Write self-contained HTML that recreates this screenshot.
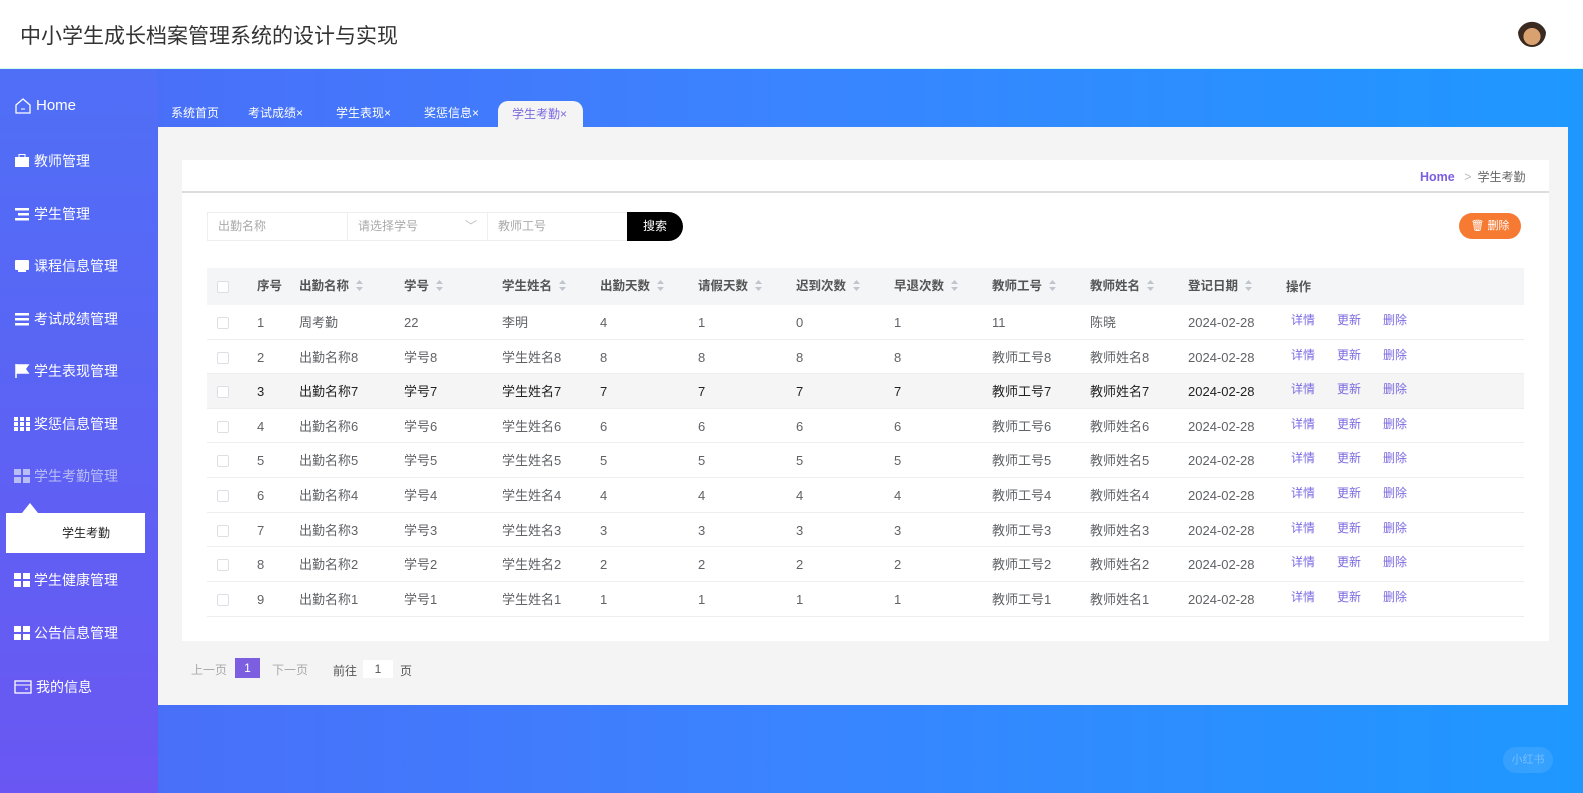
<!DOCTYPE html>
<html><head><meta charset="utf-8"><style>
*{margin:0;padding:0;box-sizing:border-box}
body{width:1583px;height:793px;overflow:hidden;position:relative;font-family:"Liberation Sans","Noto Sans CJK SC",sans-serif;background:linear-gradient(90deg,#4d6af7 0%,#3a84ff 50%,#1e98ff 100%)}
.abs{position:absolute}
.top{left:0;top:0;width:1583px;height:69px;background:#fff;border-bottom:1px solid #cfe}
.title{left:20px;top:20px;font-size:21px;color:#333}
.side{left:0;top:69px;width:158px;height:724px;background:linear-gradient(180deg,#4f6ff7 0%,#5f60f3 60%,#6a57f3 100%)}
.mi{position:absolute;left:14px;color:#fff;font-size:14px;display:flex;align-items:center;gap:4px;height:20px;line-height:20px}
.ico{width:16px;height:14px;display:inline-block}
.tab{position:absolute;top:100px;height:27px;font-size:12px;color:#fff;line-height:27px;white-space:nowrap}
.content{left:158px;top:127px;width:1410px;height:578px;background:#f4f4f4}
.card{left:182px;top:160px;width:1367px;height:481px;background:#fff}
.bc{left:182px;top:191px;width:1367px;height:2px;background:#ddd}
.inp{top:212px;height:29px;border:1px solid #eee;background:#fff;font-size:12px;color:#aaa;line-height:27px;padding-left:10px}
.th{top:268px;left:207px;width:1317px;height:37px;background:#f4f5f7}
.row{left:207px;width:1317px;border-bottom:1px solid #eee;background:#fff}
.c{position:absolute;font-size:13px;color:#606266;white-space:nowrap}
.h{font-weight:bold;color:#555;font-size:12.5px}
.cb{position:absolute;left:217px;width:12px;height:12px;border:1px solid #dcdfe6;border-radius:2px;background:#fff}
.lk{color:#7b6ae0;font-size:12px}
.s{margin-left:7px;vertical-align:-1px}
</style></head><body>
<div class="abs top"></div>
<div class="abs title">中小学生成长档案管理系统的设计与实现</div>
<div class="abs" style="left:1518px;top:17px;width:28px;height:30px;border-radius:50%;background:radial-gradient(circle at 50% 65%,#d9a070 0 35%,#3a2a20 36% 60%,transparent 62%)"></div>
<div class="abs side"></div>
<div class="mi" style="top:96px;font-size:15px"><svg width="18" height="18" viewBox="0 0 18 18"><path d="M2 8L9 2l7 6v8H2z" fill="none" stroke="#fff" stroke-width="1.3"/><path d="M7 12h4" stroke="#fff"/></svg>Home</div>
<div class="mi" style="top:151px"><svg class="ico" viewBox="0 0 16 14"><rect x="1" y="3" width="14" height="10" fill="#fff"/><rect x="5" y="0.5" width="6" height="3" fill="none" stroke="#fff"/></svg>教师管理</div>
<div class="mi" style="top:204px"><svg class="ico" viewBox="0 0 16 14"><rect x="1" y="1" width="14" height="2.5" fill="#fff"/><rect x="4" y="6" width="11" height="2.5" fill="#fff"/><rect x="1" y="11" width="14" height="2.5" fill="#fff"/></svg>学生管理</div>
<div class="mi" style="top:256px"><svg class="ico" viewBox="0 0 16 14"><rect x="1" y="1" width="14" height="10" rx="1" fill="#fff"/><rect x="4" y="11" width="8" height="2" fill="#fff"/></svg>课程信息管理</div>
<div class="mi" style="top:309px"><svg class="ico" viewBox="0 0 16 14"><rect x="1" y="1" width="14" height="2.5" fill="#fff"/><rect x="1" y="6" width="14" height="2.5" fill="#fff"/><rect x="1" y="11" width="14" height="2.5" fill="#fff"/></svg>考试成绩管理</div>
<div class="mi" style="top:361px"><svg class="ico" viewBox="0 0 16 14"><path d="M2 0v14M2 1h12l-3 4 3 4H2" fill="#fff" stroke="#fff" stroke-width="1.5"/></svg>学生表现管理</div>
<div class="mi" style="top:414px"><svg class="ico" viewBox="0 0 16 14"><g fill="#fff"><rect x="0" y="0" width="4" height="4"/><rect x="6" y="0" width="4" height="4"/><rect x="12" y="0" width="4" height="4"/><rect x="0" y="5" width="4" height="4"/><rect x="6" y="5" width="4" height="4"/><rect x="12" y="5" width="4" height="4"/><rect x="0" y="10" width="4" height="4"/><rect x="6" y="10" width="4" height="4"/><rect x="12" y="10" width="4" height="4"/></g></svg>奖惩信息管理</div>
<div class="mi" style="top:466px;color:#b8bdf5"><svg class="ico" viewBox="0 0 16 14"><g fill="#b8bdf5"><rect x="0" y="0" width="7" height="6"/><rect x="9" y="0" width="7" height="6"/><rect x="0" y="8" width="7" height="6"/><rect x="9" y="8" width="7" height="6"/></g></svg>学生考勤管理</div>
<div class="abs" style="left:22px;top:503px;width:0;height:0;border-left:8px solid transparent;border-right:8px solid transparent;border-bottom:10px solid #fff"></div>
<div class="abs" style="left:6px;top:513px;width:139px;height:40px;background:#fff;font-size:12px;color:#222;line-height:40px;padding-left:56px">学生考勤</div>
<div class="mi" style="top:570px"><svg class="ico" viewBox="0 0 16 14"><g fill="#fff"><rect x="0" y="0" width="7" height="6"/><rect x="9" y="0" width="7" height="6"/><rect x="0" y="8" width="7" height="6"/><rect x="9" y="8" width="7" height="6"/></g></svg>学生健康管理</div>
<div class="mi" style="top:623px"><svg class="ico" viewBox="0 0 16 14"><g fill="#fff"><rect x="0" y="0" width="7" height="6"/><rect x="9" y="0" width="7" height="6"/><rect x="0" y="8" width="7" height="6"/><rect x="9" y="8" width="7" height="6"/></g></svg>公告信息管理</div>
<div class="mi" style="top:677px"><svg width="18" height="14" viewBox="0 0 18 14"><rect x="1" y="1" width="16" height="12" fill="none" stroke="#fff" stroke-width="1.3"/><path d="M1 5h16M11 9h3" stroke="#fff"/></svg>我的信息</div>

<div class="tab" style="left:171px">系统首页</div>
<div class="tab" style="left:248px">考试成绩×</div>
<div class="tab" style="left:336px">学生表现×</div>
<div class="tab" style="left:424px">奖惩信息×</div>
<div class="abs" style="left:498px;top:101px;width:85px;height:27px;background:#f4f4f4;border-radius:10px 10px 0 0;font-size:12px;color:#7b6ae0;line-height:27px;padding-left:14px">学生考勤×</div>

<div class="abs content"></div>
<div class="abs card"></div>
<div class="abs bc"></div>
<div class="abs" style="left:1420px;top:168px;font-size:12.5px;font-weight:bold;color:#7b5fe0">Home <span style="color:#bbb;font-weight:normal;margin:0 6px">&gt;</span><span style="color:#666;font-weight:normal;font-size:12px">学生考勤</span></div>

<div class="abs inp" style="left:207px;width:141px">出勤名称</div>
<div class="abs inp" style="left:347px;width:141px">请选择学号<span style="position:absolute;right:10px;top:0;color:#bbb">﹀</span></div>
<div class="abs inp" style="left:487px;width:141px">教师工号</div>
<div class="abs" style="left:627px;top:212px;width:56px;height:29px;background:#000;color:#fff;font-size:12px;line-height:29px;text-align:center;border-radius:0 15px 15px 0">搜索</div>
<div class="abs" style="left:1459px;top:213px;width:62px;height:26px;background:#f77a33;border-radius:13px;color:#fff;font-size:11px;line-height:26px;text-align:center">🗑 删除</div>

<div class="abs th"></div>
<div id="tb"></div>

<div class="abs" style="left:191px;top:661px;font-size:12px;color:#aaa">上一页</div>
<div class="abs" style="left:235px;top:658px;width:25px;height:20px;background:#7b5fe0;color:#fff;font-size:12px;text-align:center;line-height:20px">1</div>
<div class="abs" style="left:272px;top:661px;font-size:12px;color:#aaa">下一页</div>
<div class="abs" style="left:333px;top:662px;font-size:12px;color:#555">前往</div>
<div class="abs" style="left:363px;top:660px;width:30px;height:18px;background:#fff;font-size:12px;color:#555;text-align:center;line-height:18px">1</div>
<div class="abs" style="left:400px;top:662px;font-size:12px;color:#555">页</div>
<div class="abs" style="left:1503px;top:747px;width:50px;height:26px;border-radius:13px;background:rgba(255,255,255,.1);color:rgba(255,255,255,.3);font-size:11px;text-align:center;line-height:26px">小红书</div>

<script>
var X=[257,299,404,502,600,698,796,894,992,1090,1188];
var H=['序号','出勤名称','学号','学生姓名','出勤天数','请假天数','迟到次数','早退次数','教师工号','教师姓名','登记日期'];
var srt='<svg class="s" width="7" height="11" viewBox="0 0 7 11"><path d="M3.5 0L7 4H0z" fill="#c0c4cc"/><path d="M3.5 11L7 7H0z" fill="#c0c4cc"/></svg>';
var s='<div class="cb" style="top:281px"></div>';
H.forEach(function(h,i){s+='<div class="c h" style="left:'+X[i]+'px;top:268px;line-height:37px">'+h+(i>0?srt:'')+'</div>';});
s+='<div class="c h" style="left:1286px;top:269px;line-height:37px">操作</div>';
var rows=[[1,'周考勤','22','李明',4,1,0,1,'11','陈晓']];
for(var n=8;n>=1;n--)rows.push([9-n+1,'出勤名称'+n,'学号'+n,'学生姓名'+n,n,n,n,n,'教师工号'+n,'教师姓名'+n]);
var tops=[305,340,374,409,443,478,513,547,582];
rows.forEach(function(r,k){var top=tops[k];var h=(k<8?tops[k+1]:617)-top;var hl=k==2;
s+='<div class="abs row" style="top:'+top+'px;height:'+h+'px;'+(hl?'background:#f5f5f5':'')+'"></div><div class="cb" style="top:'+(top+12)+'px"></div>';
r.concat(['2024-02-28']).forEach(function(v,i){s+='<div class="c" style="left:'+X[i]+'px;top:'+top+'px;line-height:'+(h+1)+'px;'+(hl?'color:#222':'')+'">'+v+'</div>';});
[['详情',1291],['更新',1337],['删除',1383]].forEach(function(a){s+='<div class="c lk" style="left:'+a[1]+'px;top:'+(top-2)+'px;line-height:'+h+'px">'+a[0]+'</div>';});});
document.getElementById('tb').innerHTML=s;
</script>
</body></html>
